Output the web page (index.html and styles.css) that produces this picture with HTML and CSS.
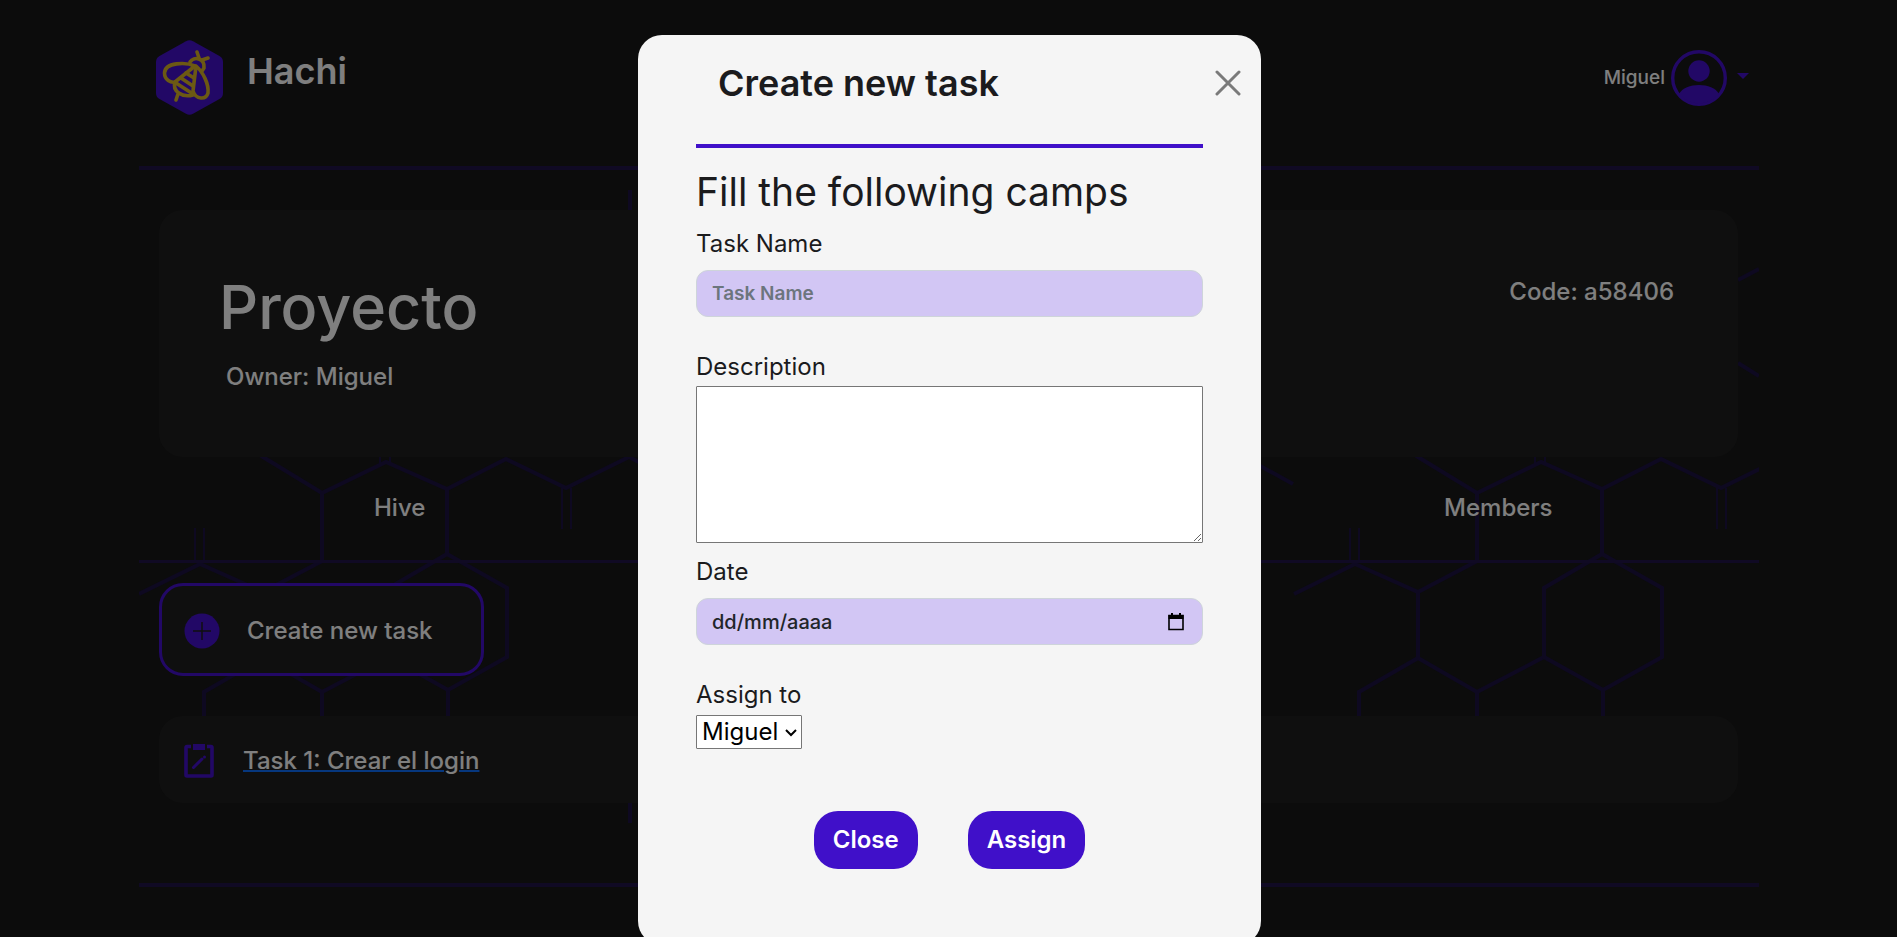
FILE: index.html
```html
<!DOCTYPE html>
<html lang="en">
<head>
<meta charset="utf-8">
<title>Hachi</title>
<link rel="stylesheet" href="styles.css">
</head>
<body>
<div class="page">
  <header class="header">
    <a class="brand" href="#">
      <svg class="brand-logo" viewBox="0 0 67 75" aria-hidden="true">
        <path d="M30 1.3Q33.500-.6 37 1.300L63.500 16Q67 18 67 22V53Q67 57 63.500 59L37 73.700Q33.500 75.600 30 73.700L3.500 59Q0 57 0 53V22Q0 18 3.500 16Z" fill="#4410cc"/>
        <g fill="none" stroke="#d8b326" stroke-width="3.600" stroke-linecap="round" stroke-linejoin="round">
          <path d="M39 26C30 22 9 22 8.500 33C8.500 40 15 43 19 42L39 26Z"/>
          <path d="M40 26C47 32 53 44 52 53C50 60 40 60 37 51Z"/>
          <path d="M34 22C38 16 49 18 48 28L46 31"/>
          <path d="M43 18L41 12M46 20L52 18"/>
          <path d="M19 42C16 51 26 58 37 55M22 54L20 60M20 43L37 54M25 38L37 46M30 33L38 38"/>
        </g>
      </svg>
      <span class="brand-name">Hachi</span>
    </a>
    <button class="user" type="button">
      <span>Miguel</span>
      <svg class="avatar" viewBox="0 0 56 56" aria-hidden="true">
        <circle cx="28" cy="28" r="26.300" fill="none" stroke="#4410cc" stroke-width="3.400"/>
        <circle cx="28" cy="21" r="10.700" fill="#4410cc"/>
        <path d="M8 44C14 32 42 32 48 44A26 26 0 0 1 8 44Z" fill="#4410cc"/>
      </svg>
      <span class="caret"></span>
    </button>
  </header>

  <main class="main">
    <svg class="pattern" viewBox="0 0 1620 713" aria-hidden="true">
      <defs>
        <g id="tile" fill="none" stroke="#1c1242" stroke-width="4">
          <path d="M65 247L124 287L183 323L247 292L308 319L367 289L427 318L490 287L550 318"/>
          <path d="M183 323V391L124 422L61 394L0 424M124 422V488L65 522V560M124 488L183 522L250 487M183 522V560"/>
          <path d="M308 319V384L250 418V487L309 520L368 487V418L308 384M309 520V560"/>
          <path d="M444 110L465 99M444 193L465 206M1096 282L1154 314M491 20V60M491 620V653"/>
          <path d="M56 358V393M65 358V392M241 280V293M251 280V293M423 318V359M432 318V359" stroke-width="2"/>
        </g>
      </defs>
      <use href="#tile"/>
      <use href="#tile" x="1155"/>
    </svg>
    <section class="card project">
      <div>
        <h1>Proyecto</h1>
        <p class="owner">Owner: Miguel</p>
      </div>
      <p class="code">Code: a58406</p>
    </section>
    <nav class="tabs">
      <a href="#">Hive</a>
      <a class="tab-last" href="#">Members</a>
    </nav>
    <button class="create" type="button">
      <svg class="icon-plus" viewBox="0 0 36 36" aria-hidden="true">
        <circle cx="18" cy="18" r="17.500" fill="#4410cc"/>
        <path d="M18 9V27M9 18H27" stroke="#1f1f1f" stroke-width="1.500"/>
      </svg>
      Create new task
    </button>
    <div class="card task">
      <svg class="icon-task" viewBox="0 0 30 36" aria-hidden="true">
        <path d="M7 3.500H3Q2 3.500 2 4.500V32Q2 33 3 33H27Q28 33 28 32V4.500Q28 3.500 27 3.500H23" fill="none" stroke="#4410cc" stroke-width="3.600"/>
        <path d="M9 1H21V7H9Z" fill="#4410cc"/>
        <path d="M9.500 24.500L18 16" stroke="#4410cc" stroke-width="3" stroke-linecap="round"/>
        <circle cx="20.500" cy="14" r="1.500" fill="#4410cc"/>
      </svg>
      <a href="#">Task 1: Crear el login</a>
    </div>
  </main>
</div>

<div class="backdrop">
  <form class="modal" role="dialog" aria-labelledby="modal-title">
    <div class="modal-head">
      <h2 id="modal-title">Create new task</h2>
      <button class="close-x" type="button" aria-label="Close dialog">
        <svg viewBox="0 0 26 26" aria-hidden="true"><path d="M2 2L24 24M24 2L2 24" stroke="#7a7a7a" stroke-width="3" stroke-linecap="round"/></svg>
      </button>
    </div>
    <div class="modal-body">
      <h3>Fill the following camps</h3>
      <label for="name">Task Name</label>
      <input class="field" id="name" type="text" placeholder="Task Name">
      <label for="desc">Description</label>
      <textarea id="desc"></textarea>
      <label for="date">Date</label>
      <div class="field date">
        <input id="date" type="text" value="dd/mm/aaaa">
        <svg viewBox="0 0 16 18" aria-hidden="true"><path d="M1 2.500H15V16.500H1Z" fill="none" stroke="#000" stroke-width="1.600"/><path d="M.5 2H15.500V6H.5ZM3 0H5V3H3ZM11 0H13V3H11Z"/></svg>
      </div>
      <label for="assign">Assign to</label>
      <div class="select">
        <select id="assign"><option>Miguel</option></select>
        <svg viewBox="0 0 12 8" aria-hidden="true"><path d="M1 1L6 6L11 1" fill="none" stroke="#000" stroke-width="2"/></svg>
      </div>
      <div class="actions">
        <button type="button">Close</button>
        <button type="submit">Assign</button>
      </div>
    </div>
  </form>
</div>
</body>
</html>
```
FILE: styles.css
```css
* { box-sizing: border-box; }
html, body { height: 100%; }
body {
  margin: 0;
  overflow: hidden;
  background: #181818;
  color: #fff;
  font-family: Inter, "Liberation Sans", sans-serif;
  font-size: 24px;
  font-weight: 500;
  line-height: 36px;
}
h1, h2, h3, p { margin: 0; }
button, input, select, textarea { font: inherit; }
a { color: inherit; text-decoration: none; }
.page { margin: 0 138px 0 139px; }

.header {
  display: flex;
  justify-content: space-between;
  align-items: flex-start;
  height: 170px;
  padding: 40px 8px 0 17px;
  border-bottom: 4px solid #201448;
}
.brand { display: flex; gap: 24px; }
.brand-logo { width: 67px; height: 75px; }
.brand-name { font-size: 36px; font-weight: 600; line-height: 62px; }
.user {
  display: flex;
  align-items: center;
  gap: 6px;
  padding: 10px 0 0;
  border: 0;
  background: none;
  color: #fff;
  font-size: 19px;
}
.avatar { width: 56px; height: 56px; }
.caret {
  margin: 0 2px 4px 4px;
  border: 6px solid transparent;
  border-top-color: #4410cc;
  border-bottom: 0;
}

.main {
  position: relative;
  padding: 40px 21px 80px 20px;
  border-bottom: 4px solid #201448;
}
.pattern { position: absolute; top: 0; left: 0; width: 100%; z-index: -1; }
.card { border-radius: 24px; background: #1f1f1f; }
.project {
  display: flex;
  justify-content: space-between;
  height: 247px;
  padding: 60px 64px 0 60px;
}
.project h1 { font-size: 61px; font-weight: 500; line-height: 74px; }
.owner { margin-top: 15px; padding-left: 7px; }
.code { padding-top: 4px; }
.tabs {
  display: grid;
  grid-template-columns: repeat(3, 1fr);
  column-gap: 28px;
  margin: 0 -21px 20px -20px;
  padding: 33px 0 34px;
  text-align: center;
  border-bottom: 3px solid #201448;
}
.tab-last { grid-column: 3; }
.create {
  display: flex;
  align-items: center;
  gap: 27px;
  width: 325px;
  height: 93px;
  padding: 3px 22px 0;
  border: 3px solid #4410cc;
  border-radius: 24px;
  background: #1f1f1f;
  color: #fff;
}
.icon-plus { width: 36px; height: 36px; }
.task {
  display: flex;
  align-items: center;
  gap: 29px;
  height: 87px;
  margin-top: 40px;
  padding: 3px 25px 0;
}
.icon-task { width: 30px; height: 36px; }
.task a {
  text-decoration: underline #0d6efd 2px;
}

.backdrop {
  position: fixed;
  inset: 0;
  overflow: hidden;
  padding-top: 35px;
  background: rgba(0, 0, 0, .5);
}
.modal {
  width: 623px;
  margin: 0 auto;
  padding-bottom: 76px;
  border-radius: 24px;
  background: #f5f5f5;
  color: #1b1b1d;
}
.backdrop { padding-left: 2px; }
.modal-head {
  display: flex;
  justify-content: space-between;
  align-items: center;
  height: 96px;
  padding: 0 20px 0 80px;
}
.modal-head h2 { font-size: 36px; font-weight: 600; line-height: 48px; }
.close-x { padding: 0; border: 0; background: none; line-height: 0; }
.close-x svg { width: 26px; height: 26px; }
.modal-body {
  display: flex;
  flex-direction: column;
  margin: 13px 58px 0;
  padding-top: 22px;
  border-top: 4px solid #4010c9;
}
.modal-body h3 { margin-bottom: 12px; font-size: 39px; font-weight: 400; line-height: 44px; }
label { font-weight: 400; }
.field {
  height: 47px;
  margin: 8px 0 32px;
  padding: 0 15px;
  border: 1px solid #ced4da;
  border-radius: 12px;
  background: #d2c6f4;
  color: #212529;
  font-size: 19px;
}
.field::placeholder { color: #6c757d; opacity: 1; font-weight: 600; }
textarea {
  height: 157px;
  margin: 1px 0 11px;
  border: 1px solid #767676;
  border-radius: 1px;
  background: #fff;
}
.date { display: flex; align-items: center; padding-right: 18px; font-size: 20px; }
.date input { flex: 1; min-width: 0; padding: 0; border: 0; background: none; color: inherit; }
.date svg { width: 16px; height: 18px; }
.select { position: relative; align-self: flex-start; margin-top: 2px; line-height: 0; }
.select select {
  width: 106px;
  height: 34px;
  padding: 0 5px;
  border: 1px solid #767676;
  border-radius: 1px;
  background: #fff;
  color: #000;
  appearance: none;
  font-weight: 400;
  line-height: 32px;
}
.select svg { position: absolute; top: 14px; right: 5px; width: 12px; height: 8px; }
.actions { display: flex; justify-content: center; gap: 50px; margin-top: 62px; }
.actions button {
  height: 58px;
  padding: 0 19px;
  border: 0;
  border-radius: 24px;
  background: #4010c9;
  color: #fff;
  font-weight: 600;
}
```
